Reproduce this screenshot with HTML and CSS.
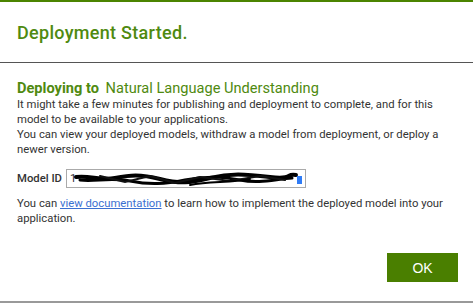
FILE: index.html
```html
<!DOCTYPE html>
<html>

<head>
    <link rel="stylesheet" href="styles.css">
</head>

<body>
    <div class="modal">
        <div class="modal-header">
            <h2 class="modal-title">Deployment Started.</h2>
        </div>
        <div class="modal-body">
            <h3 class="deploy-title"><b>Deploying to</b> Natural Language Understanding</h3>
            <p class="text">It might take a few minutes for publishing and deployment to complete, and for this model to be available to your applications.</p>
            <p class="text">You can view your deployed models, withdraw a model from deployment, or deploy a newer version.</p>
            <div class="model-row">
                <span class="model-label">Model ID</span>
                <div class="model-input">
                    <span class="model-value">1</span>
                    <svg class="scribble" width="234" height="16" viewBox="0 0 234 16">
                        <path d="M6 6 C20 4 30 10 45 7 S70 3 90 8 S120 12 140 7 S175 3 200 6 S215 2 226 4" fill="none" stroke="#000" stroke-width="4" stroke-linecap="round"/>
                        <path d="M10 9 C25 11 40 6 60 10 S95 13 115 9 S150 5 170 9 S205 8 222 7" fill="none" stroke="#000" stroke-width="3" stroke-linecap="round"/>
                        <path d="M30 5 L55 11 L80 5 L105 12 L130 6 L160 10 L190 5 L215 9" fill="none" stroke="#111" stroke-width="2" stroke-linecap="round"/>
                        <path d="M120 14 C140 10 160 12 180 8" fill="none" stroke="#000" stroke-width="2" stroke-linecap="round"/>
                        <rect x="227" y="5" width="5" height="8" fill="#2f7cf6"/>
                    </svg>
                </div>
            </div>
            <p class="text">You can <a href="#" class="link">view documentation</a> to learn how to implement the deployed model into your application.</p>
        </div>
        <div class="modal-footer">
            <button class="button">OK</button>
        </div>
    </div>
</body>

</html>
```

FILE: styles.css
```css
body {
    margin: 0;
    background: #ffffff;
    font-family: Roboto, "Noto Sans", sans-serif;
    color: #333333;
}

.modal {
    width: 473px;
    height: 303px;
    box-sizing: border-box;
    border-top: 2px solid #4b8400;
    border-bottom: 2px solid #999999;
    display: flex;
    flex-direction: column;
}

.modal-header {
    height: 60px;
    border-bottom: 1px solid #555555;
    padding: 0 17px;
    display: flex;
    align-items: center;
}

.modal-title {
    margin: 0;
    font-size: 18px;
    font-weight: 500;
    letter-spacing: 0.3px;
    color: #4f8a10;
}

.modal-body {
    padding: 16px 10px 0 17px;
}

.deploy-title {
    margin: 0;
    font-size: 14.6px;
    font-weight: 400;
    line-height: 18px;
    color: #4f8a10;
}

.deploy-title b {
    font-weight: 700;
    margin-right: 3px;
}

.text {
    margin: 0;
    font-size: 11.3px;
    line-height: 15px;
}

.model-row {
    display: flex;
    align-items: center;
    margin: 12px 0 8px;
}

.model-label {
    font-size: 11.3px;
    font-weight: 500;
    margin-right: 4px;
}

.model-input {
    width: 238px;
    height: 17px;
    border: 1px solid #aaaaaa;
    display: flex;
    align-items: center;
    position: relative;
    font-size: 11.3px;
}

.model-value {
    padding-left: 3px;
}

.scribble {
    position: absolute;
    left: 3px;
    top: 1px;
}

.link {
    color: #3b6fd1;
}

.modal-footer {
    margin-top: auto;
    display: flex;
    justify-content: flex-end;
    padding: 0 15px 19px;
}

.button {
    width: 71px;
    height: 29px;
    border: none;
    background: #4a7f00;
    color: #ffffff;
    font-family: "Liberation Sans", Arial, sans-serif;
    font-size: 14px;
    cursor: pointer;
}
```
